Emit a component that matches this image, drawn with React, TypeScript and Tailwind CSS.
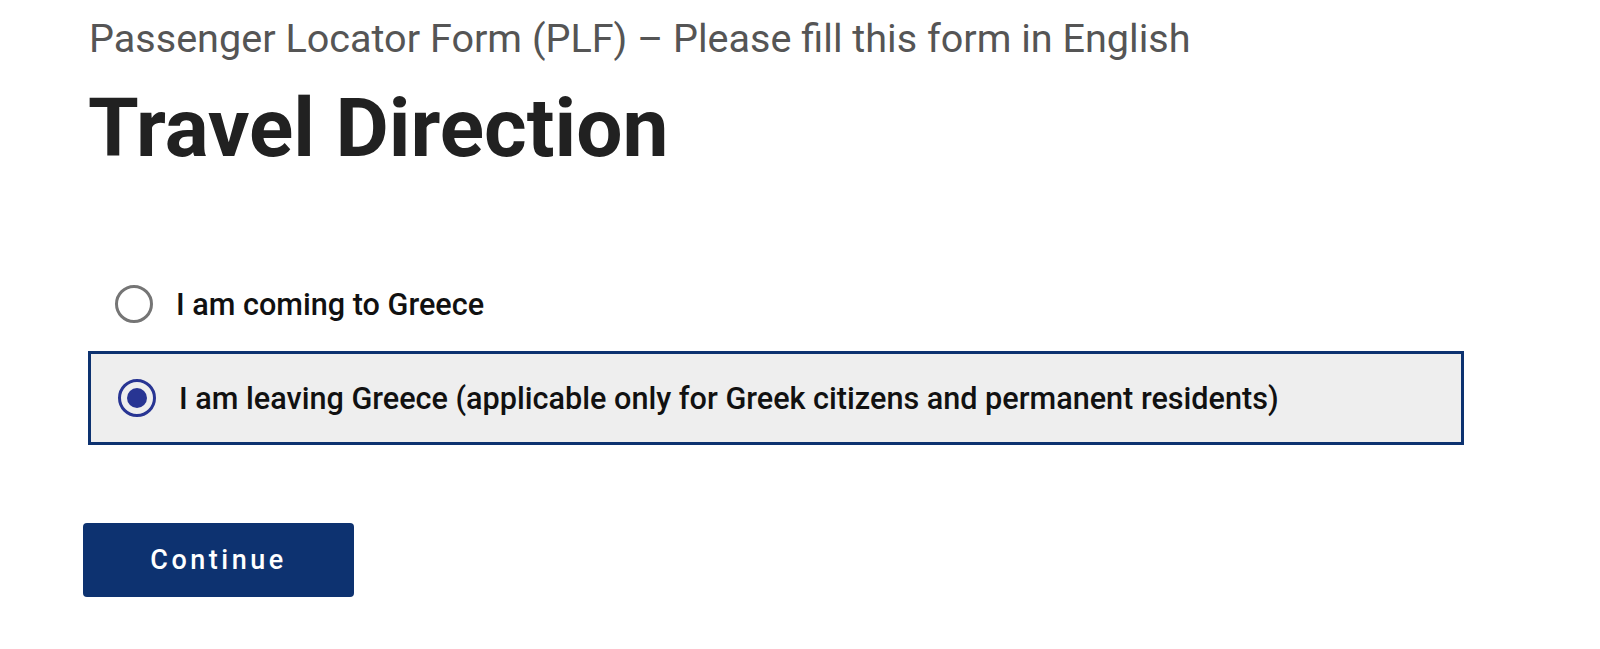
import { useState } from 'react'

const options = [
  { id: 'arrival', label: 'I am coming to Greece' },
  { id: 'departure', label: 'I am leaving Greece (applicable only for Greek citizens and permanent residents)' },
]

export default function App() {
  const [direction, setDirection] = useState('departure')

  return (
    <div
      className="min-h-screen bg-white"
      style={{ fontFamily: 'Roboto, "Noto Sans", sans-serif' }}
    >
      <div className="pl-[88px] pt-[15px]">
        {/* Header */}
        <p className="text-[39.6px] leading-[1.2] text-[#555555] ml-[1px]">
          Passenger Locator Form (PLF) – Please fill this form in English
        </p>
        <h1 className="mt-[16px] text-[82px] leading-[1.2] font-bold text-[#212121]">
          Travel Direction
        </h1>

        {/* Options */}
        <div className="mt-[80px] w-[1376px]">
          {options.map((opt) => {
            const selected = direction === opt.id
            return (
              <label
                key={opt.id}
                onClick={() => setDirection(opt.id)}
                className={
                  selected
                    ? 'flex items-center h-[94px] pl-[27px] border-[3px] border-[#0d3270] bg-[#eeeeee] cursor-pointer'
                    : 'flex items-center h-[94px] pl-[27px] cursor-pointer'
                }
              >
                <span
                  className={
                    selected
                      ? 'flex items-center justify-center w-[38px] h-[38px] rounded-full border-[3px] border-[#283593] flex-shrink-0'
                      : 'flex items-center justify-center w-[38px] h-[38px] rounded-full border-[3px] border-[#757575] flex-shrink-0'
                  }
                >
                  {selected && <span className="w-[20px] h-[20px] rounded-full bg-[#283593]" />}
                </span>
                <span className="ml-[23px] mt-[2px] text-[30.6px] font-medium text-[#111111]">{opt.label}</span>
              </label>
            )
          })}
        </div>
      </div>

      <div className="pl-[83px] mt-[78px]">
        <button className="w-[271px] h-[74px] rounded-[4px] bg-[#0d3270] text-white text-[27px] font-medium tracking-[0.13em]">
          Continue
        </button>
      </div>
    </div>
  )
}
